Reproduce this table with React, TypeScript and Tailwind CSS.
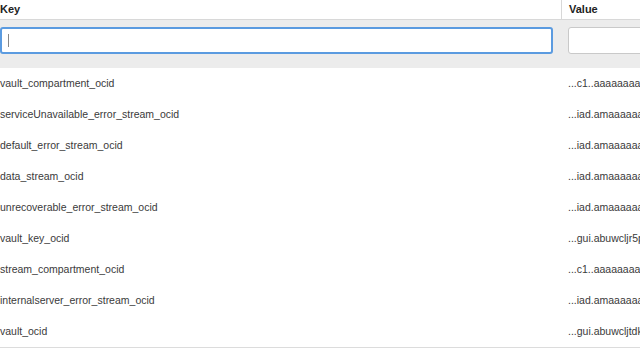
import React from 'react';

const ROWS: [string, string][] = [
  ['vault_compartment_ocid', '...c1..aaaaaaaat7xq4'],
  ['serviceUnavailable_error_stream_ocid', '...iad.amaaaaaa4hq2'],
  ['default_error_stream_ocid', '...iad.amaaaaaa4hq2'],
  ['data_stream_ocid', '...iad.amaaaaaa4hq2'],
  ['unrecoverable_error_stream_ocid', '...iad.amaaaaaa4hq2'],
  ['vault_key_ocid', '...gui.abuwcljr5pq'],
  ['stream_compartment_ocid', '...c1..aaaaaaaat7xq4'],
  ['internalserver_error_stream_ocid', '...iad.amaaaaaa4hq2'],
  ['vault_ocid', '...gui.abuwcljtdk2'],
];

function App() {
  return (
    <div
      className="w-[640px] h-[360px] overflow-hidden bg-white text-[10.5px] text-[#3a3a3a]"
      style={{ fontFamily: '"Liberation Sans", Arial, sans-serif' }}
    >
      <div className="w-[760px]">
        {/* Header */}
        <div className="grid grid-cols-[561px_1fr] h-[20px] border-b border-[#d8d8d8] text-[11px]">
          <div className="flex items-center font-bold text-[#222] pb-[1px]">Key</div>
          <div className="flex items-center font-bold text-[#222] pl-[7px] border-l border-[#d8d8d8] pb-[1px]">Value</div>
        </div>

        {/* Filter row */}
        <div className="grid grid-cols-[561px_1fr] h-[48px] bg-[#ececec] pt-[7px]">
          <div className="pr-[8px]">
            <div className="h-[27px] bg-white border-2 border-[#5b9be0] rounded-[3px] flex items-center pl-[6px]">
              <span className="w-px h-[13px] bg-[#888]" />
            </div>
          </div>
          <div className="pl-[7px]">
            <div className="h-[27px] bg-white border border-[#c9c9c9] rounded-[3px]" />
          </div>
        </div>

        {/* Rows */}
        <div className="border-b border-[#dcdcdc]">
          {ROWS.map(([k, v]) => (
            <div key={k} className="grid grid-cols-[561px_1fr] h-[31px] items-center">
              <div className="whitespace-nowrap">{k}</div>
              <div className="pl-[7px] whitespace-nowrap">{v}</div>
            </div>
          ))}
        </div>
      </div>
    </div>
  );
}

export default App;
